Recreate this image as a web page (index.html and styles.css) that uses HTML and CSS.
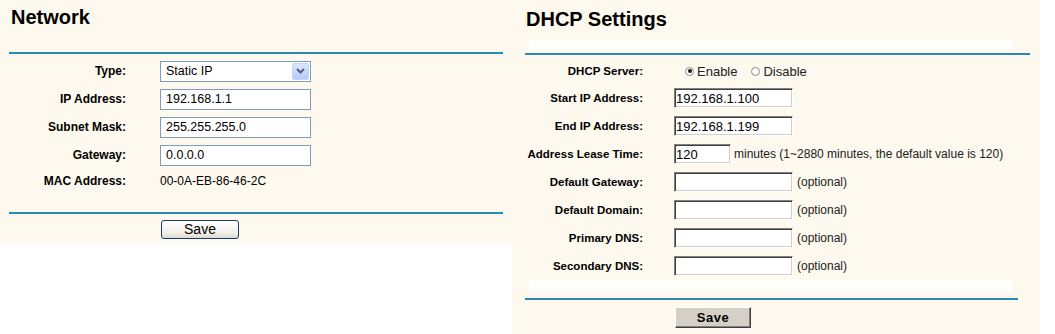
FILE: index.html
```html
<!DOCTYPE html>
<html lang="en">
<head>
    <meta charset="UTF-8" />
    <title>Network / DHCP Settings</title>
    <link rel="stylesheet" href="styles.css">
</head>
<body>
    <div class="page">
        <section class="panel network">
            <h1>Network</h1>
            <div class="rule"></div>

            <div class="form">
                <div class="row">
                    <label class="label">Type:</label>
                    <div class="select">
                        <span class="select-text">Static IP</span>
                        <span class="select-arrow">
                            <svg width="9" height="6" viewBox="0 0 9 6"><path d="M1 1 L4.5 4.5 L8 1" fill="none" stroke="#4d6185" stroke-width="2"/></svg>
                        </span>
                    </div>
                </div>
                <div class="row">
                    <label class="label">IP Address:</label>
                    <input class="xp-input" type="text" value="192.168.1.1">
                </div>
                <div class="row">
                    <label class="label">Subnet Mask:</label>
                    <input class="xp-input" type="text" value="255.255.255.0">
                </div>
                <div class="row">
                    <label class="label">Gateway:</label>
                    <input class="xp-input" type="text" value="0.0.0.0">
                </div>
                <div class="row row-short">
                    <label class="label">MAC Address:</label>
                    <span class="value">00-0A-EB-86-46-2C</span>
                </div>
            </div>

            <div class="rule rule-bottom"></div>
            <div class="actions">
                <button class="xp-button">Save</button>
            </div>
        </section>

        <section class="panel dhcp">
            <h1>DHCP Settings</h1>
            <div class="strip strip-top"></div>
            <div class="rule"></div>

            <div class="form">
                <div class="row row-radio">
                    <label class="label">DHCP Server:</label>
                    <span class="radio checked"></span><span class="radio-text">Enable</span>
                    <span class="radio"></span><span class="radio-text">Disable</span>
                </div>
                <div class="row">
                    <label class="label">Start IP Address:</label>
                    <input class="classic-input" type="text" value="192.168.1.100">
                </div>
                <div class="row">
                    <label class="label">End IP Address:</label>
                    <input class="classic-input" type="text" value="192.168.1.199">
                </div>
                <div class="row">
                    <label class="label">Address Lease Time:</label>
                    <input class="classic-input short" type="text" value="120">
                    <span class="hint hint-long">minutes (1~2880 minutes, the default value is 120)</span>
                </div>
                <div class="row">
                    <label class="label">Default Gateway:</label>
                    <input class="classic-input" type="text">
                    <span class="hint">(optional)</span>
                </div>
                <div class="row">
                    <label class="label">Default Domain:</label>
                    <input class="classic-input" type="text">
                    <span class="hint">(optional)</span>
                </div>
                <div class="row">
                    <label class="label">Primary DNS:</label>
                    <input class="classic-input" type="text">
                    <span class="hint">(optional)</span>
                </div>
                <div class="row">
                    <label class="label">Secondary DNS:</label>
                    <input class="classic-input" type="text">
                    <span class="hint">(optional)</span>
                </div>
            </div>

            <div class="strip strip-bottom"></div>
            <div class="rule rule-bottom"></div>
            <div class="actions">
                <button class="classic-button">Save</button>
            </div>
        </section>
    </div>
</body>
</html>
```
FILE: styles.css
```css
:root {
    --cream: #fdf9ee;
    --rule: #2e86b5;
    --xp-border: #7f9db9;
}

* {
    box-sizing: border-box;
}

body {
    margin: 0;
    font-family: 'Liberation Sans', Arial, sans-serif;
    background: #ffffff;
    color: #000000;
}

.page {
    display: flex;
    align-items: flex-start;
}

.panel {
    background: var(--cream);
}

h1 {
    margin: 0;
    font-size: 20px;
    line-height: 24px;
    font-weight: bold;
}

.rule {
    height: 2px;
    background: var(--rule);
}

.strip {
    background: #fffefb;
}

.row {
    display: flex;
    align-items: center;
    height: 28px;
}

.label {
    text-align: right;
    font-weight: bold;
    flex-shrink: 0;
}

/* ---- Network panel ---- */

.network {
    width: 512px;
    height: 243px;
}

.network h1 {
    padding: 5px 0 0 11px;
}

.network .rule {
    margin: 23px 0 0 9px;
    width: 494px;
}

.network .form {
    padding-top: 3px;
}

.network .label {
    width: 126px;
    margin-right: 34px;
    font-size: 12px;
}

.network .row-short {
    height: 24px;
}

.network .rule-bottom {
    margin-top: 19px;
}

.network .actions {
    padding: 6px 0 0 161px;
}

.value {
    font-size: 12px;
}

.xp-input {
    width: 151px;
    height: 21px;
    border: 1px solid var(--xp-border);
    background: #ffffff;
    font-family: inherit;
    font-size: 12.5px;
    padding: 0 0 0 5px;
    margin: 0;
    color: #000;
}

.select {
    display: flex;
    align-items: center;
    justify-content: space-between;
    width: 151px;
    height: 21px;
    border: 1px solid var(--xp-border);
    background: #ffffff;
    font-size: 12.5px;
}

.select-text {
    padding-left: 5px;
}

.select-arrow {
    display: flex;
    align-items: center;
    justify-content: center;
    width: 17px;
    height: 17px;
    margin-right: 1px;
    background: linear-gradient(#dbe6fd, #b7cbf7);
    border: 1px solid #c3d3fd;
    border-radius: 2px;
}

.xp-button {
    width: 78px;
    height: 19px;
    padding: 0;
    border: 1px solid #1c3a6e;
    border-radius: 3px;
    background: linear-gradient(#ffffff, #f0efe8 70%, #dcd9cc);
    font-family: inherit;
    font-size: 14px;
    line-height: 17px;
    color: #000;
}

/* ---- DHCP panel ---- */

.dhcp {
    width: 528px;
    height: 334px;
}

.dhcp h1 {
    padding: 7px 0 0 14px;
}

.dhcp .strip-top {
    margin: 9px 0 0 17px;
    width: 483px;
    height: 10px;
}

.dhcp .rule {
    margin: 3px 0 0 13px;
    width: 505px;
}

.dhcp .form {
    padding-top: 3px;
}

.dhcp .label {
    width: 131px;
    margin-right: 31px;
    font-size: 11.5px;
}

.dhcp .row-radio {
    height: 26px;
}

.dhcp .strip-bottom {
    margin-left: 17px;
    width: 483px;
    height: 12px;
}

.dhcp .rule-bottom {
    margin: 6px 0 0 13px;
    width: 493px;
}

.dhcp .actions {
    padding: 7px 0 0 163px;
}

.radio {
    position: relative;
    width: 9px;
    height: 9px;
    border-radius: 50%;
    border: 1px solid #8a8a8a;
    background: #ffffff;
    margin-left: 11px;
}

.radio + .radio-text + .radio {
    margin-left: 14px;
}

.radio.checked::after {
    content: '';
    position: absolute;
    left: 1.5px;
    top: 1.5px;
    width: 4px;
    height: 4px;
    border-radius: 50%;
    background: #111111;
}

.radio-text {
    font-size: 13px;
    margin-left: 3px;
    color: #222;
}

.classic-input {
    width: 119px;
    height: 20px;
    margin: 0;
    padding: 0 0 0 1px;
    border: 1px solid;
    border-color: #808080 #ffffff #ffffff #808080;
    box-shadow: inset 1px 1px 0 #404040, inset -1px -1px 0 #d4d0c8;
    background: #ffffff;
    font-family: inherit;
    font-size: 13px;
    color: #000;
}

.classic-input.short {
    width: 57px;
}

.hint {
    font-size: 12px;
    margin-left: 4px;
    color: #222;
}

.hint-long {
    margin-left: 3px;
}

.classic-button {
    width: 76px;
    height: 21px;
    padding: 0;
    border: 1px solid;
    border-color: #ffffff #404040 #404040 #ffffff;
    box-shadow: inset -1px -1px 0 #808080;
    background: #d4d0c8;
    font-family: inherit;
    font-size: 13px;
    font-weight: bold;
    letter-spacing: 0.5px;
    color: #000;
}
```
